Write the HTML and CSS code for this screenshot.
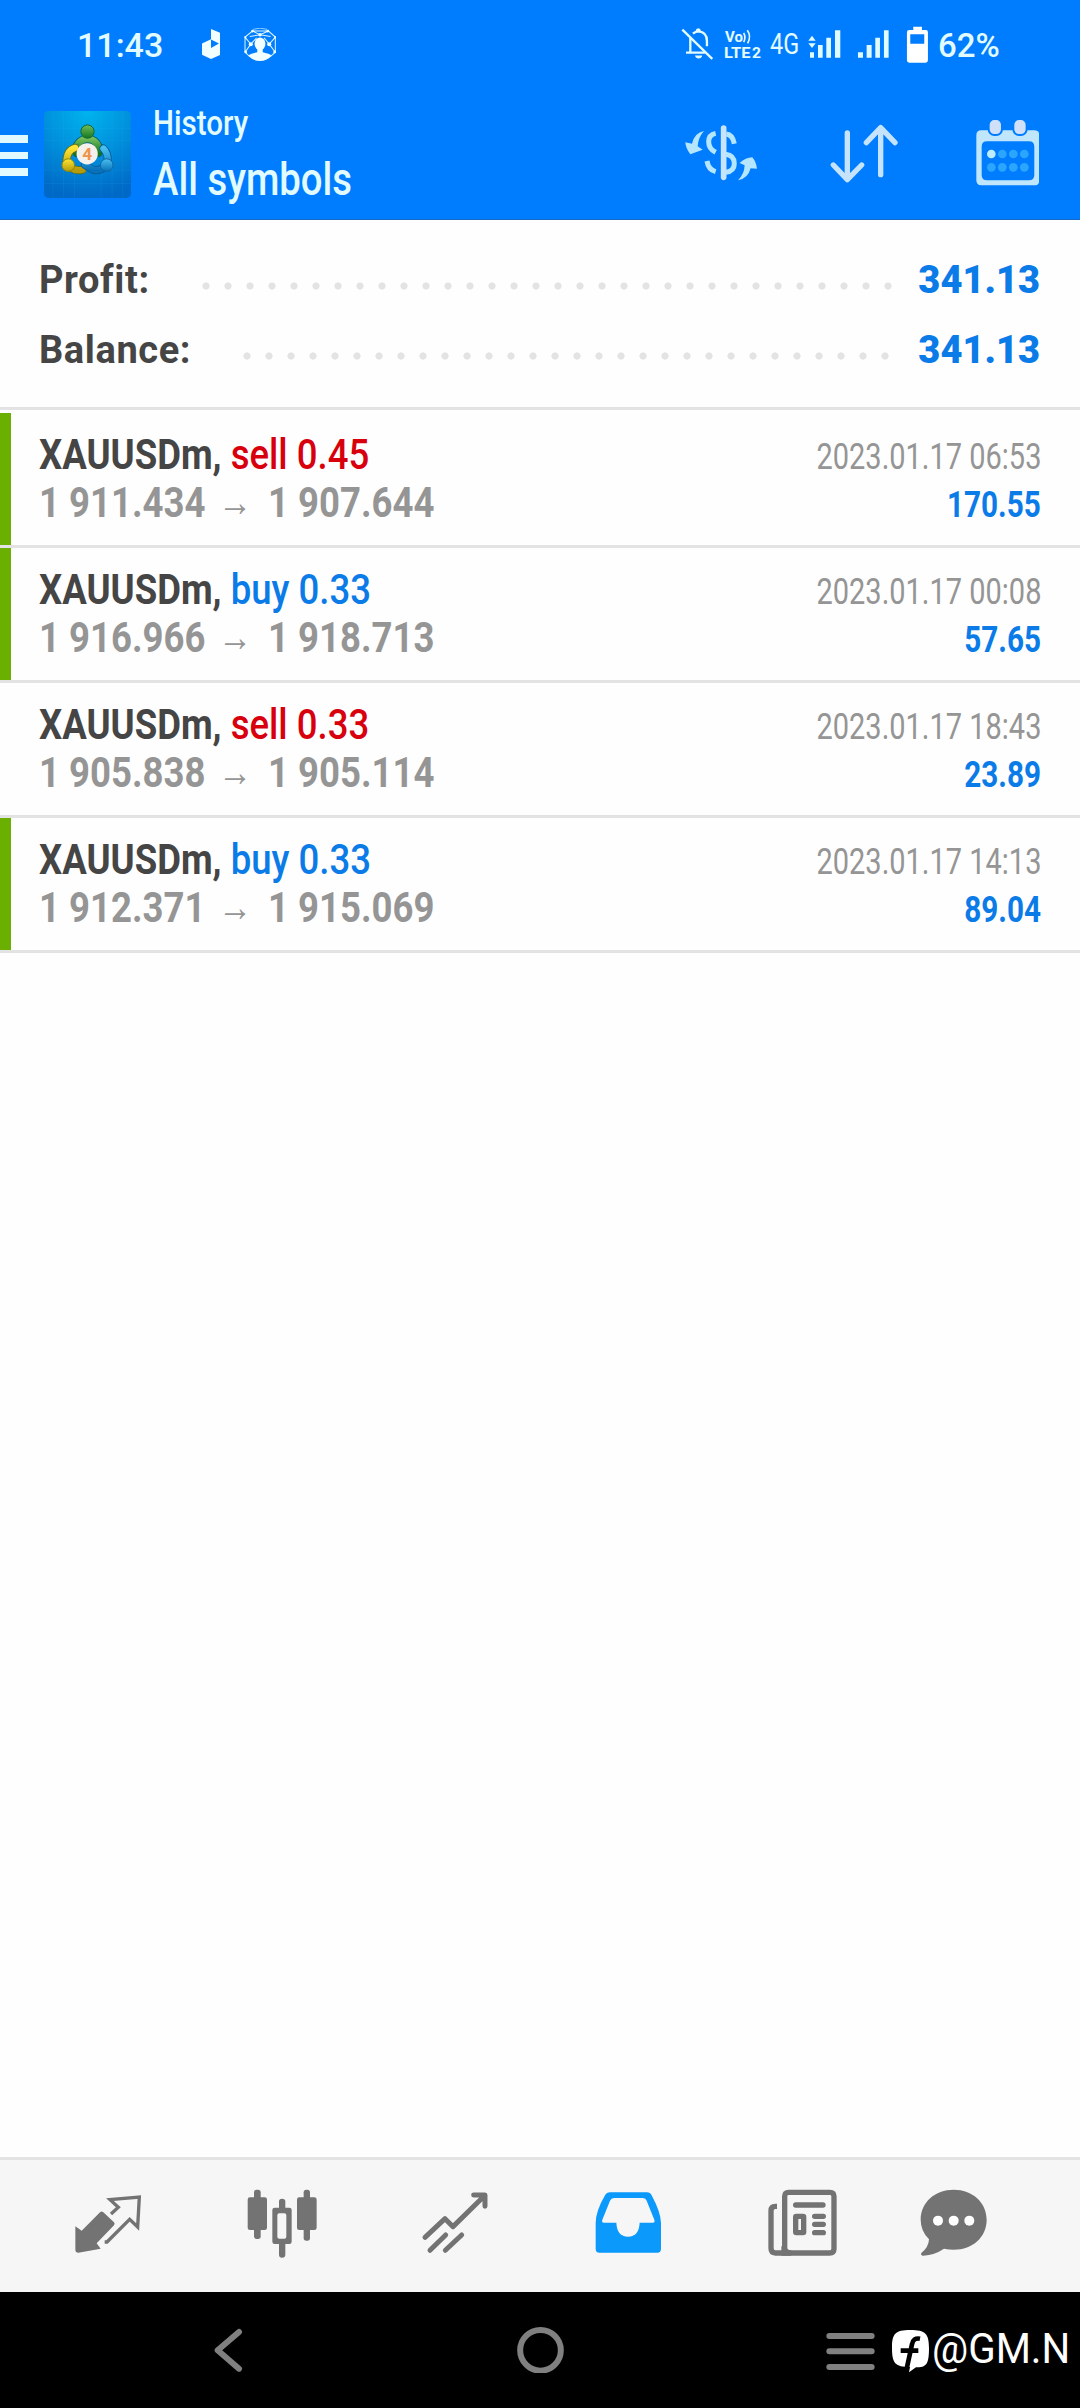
FILE: index.html
```html
<!DOCTYPE html>
<html lang="en">
  <head>
    <meta charset="utf-8" />
    <title>History - All symbols</title>
    <link rel="stylesheet" href="styles.css">
  </head>
  <body>
    <header class="header">
      <div class="status">
        <span class="clock">11:43</span>
        <svg class="status-app" viewBox="587 87 52 91" preserveAspectRatio="none">
          <path fill="#f2ffff" fill-rule="evenodd" d="M613 87L639 98V166L613 178L587 165V131L613 118ZM613 119V145L636 131Z" />
        </svg>
        <svg class="status-globe" viewBox="708 83 94 98" preserveAspectRatio="none">
          <g fill="none" stroke="#d8f6ff" stroke-width="3">
            <path d="M711 155V110L733 92H780L800 110V155L785 168M711 155L725 168M733 92L755 103L780 92M711 110L728 131L711 155M800 110L782 131L800 155M728 131L745 112M782 131L767 112M725 108L755 103L786 108" />
            <path stroke-width="2" d="M735 87Q755 80 776 87" />
          </g>
          <g fill="#f2ffff">
            <circle cx="755" cy="103" r="5" /><circle cx="728" cy="131" r="6" /><circle cx="782" cy="131" r="6" />
            <circle cx="733" cy="92" r="4" /><circle cx="778" cy="92" r="4" /><circle cx="712" cy="110" r="3" />
            <circle cx="799" cy="110" r="3" /><circle cx="713" cy="154" r="4" /><circle cx="798" cy="154" r="4" />
            <ellipse cx="755" cy="130" rx="16" ry="19" />
            <path d="M747 142H763V155L782 160Q788 163 788 167Q775 181 755 181Q735 181 722 167Q722 163 728 160L747 155Z" />
          </g>
        </svg>
        <svg class="status-bell" viewBox="62 80 98 110">
          <g fill="none" stroke="#e4fbff" stroke-width="7">
            <path d="M66 88L156 176" />
            <path d="M90 112V154M77 157H134" />
            <path d="M98 100Q105 93 115 93Q140 95 140 122V138" />
          </g>
          <path fill="#e4fbff" d="M106 92Q107 84 114 84Q121 84 122 92ZM104 166H126Q124 175 115 175Q106 175 104 166Z" />
        </svg>
        <svg class="status-volte" viewBox="190 80 116 110">
          <g class="volte-text">
            <text x="196" y="125" textLength="54" lengthAdjust="spacingAndGlyphs">Vo</text>
            <text x="193" y="172" textLength="80" lengthAdjust="spacingAndGlyphs">LTE</text>
            <text x="277" y="172" textLength="27" lengthAdjust="spacingAndGlyphs">2</text>
          </g>
          <path fill="none" stroke="#e4fbff" stroke-width="5" d="M252 98Q260 111 252 125M263 90Q276 108 264 129" />
        </svg>
        <span class="net">4G</span>
        <svg class="status-signal" viewBox="450 76 362 114">
          <g fill="#e0fbff">
            <path d="M451 120L462 105L473 120ZM451 128H473L462 142Z" />
            <path d="M456 155H468V171H456ZM480 133H494V171H480ZM505 111H519V171H505ZM531 89H547V171H531Z" />
            <path d="M600 155H615V171H600ZM626 133H641V171H626ZM652 111H666V171H652ZM678 89H692V171H678Z" />
          </g>
          <path fill="#fff" fill-rule="evenodd" d="M766 78H792V88H804Q810 88 810 95V179Q810 186 803 186H754Q747 186 747 179V95Q747 88 754 88H766ZM757 101V129H799V101Z" />
        </svg>
        <span class="charge">62%</span>
      </div>

      <div class="toolbar">
        <div class="menu"><i></i><i></i><i></i></div>
        <svg class="app-icon" viewBox="43 32 262 262">
          <defs>
            <radialGradient id="bg" cx="0.5" cy="0" r="1">
              <stop offset="0" stop-color="#00b4ee" />
              <stop offset="0.5" stop-color="#0090dc" />
              <stop offset="1" stop-color="#0068c6" />
            </radialGradient>
            <linearGradient id="green" x1="0" y1="0" x2="0" y2="1">
              <stop offset="0" stop-color="#71bd5c" /><stop offset="1" stop-color="#14771f" />
            </linearGradient>
            <linearGradient id="yellow" x1="0" y1="0" x2="0" y2="1">
              <stop offset="0" stop-color="#ffe535" /><stop offset="1" stop-color="#b59a0a" />
            </linearGradient>
            <linearGradient id="blue" x1="0" y1="0" x2="0" y2="1">
              <stop offset="0" stop-color="#49bfed" /><stop offset="1" stop-color="#0871b9" />
            </linearGradient>
          </defs>
          <rect x="43" y="32" width="262" height="262" rx="14" fill="url(#bg)" />
          <path stroke="#2cb0ee" stroke-opacity="0.2" stroke-width="2" d="M70 32V294M102 32V294M135 32V294M215 32V294M248 32V294M280 32V294M43 85H305M43 120H305M43 210H305M43 250H305" />
          <g fill="none" stroke-linecap="round">
            <path stroke="#0b5c71" stroke-width="25" d="M141 158A34 34 0 1 1 207 158" />
            <path stroke="url(#green)" stroke-width="20" d="M141 158A34 34 0 1 1 207 158" />
            <path stroke="#657013" stroke-width="24" d="M137 143Q111 151 111 184Q123 216 159 209" />
            <path stroke="url(#yellow)" stroke-width="19" d="M137 143Q111 151 111 184Q123 216 159 209" />
            <path stroke="#075b9b" stroke-width="24" d="M222 145Q236 160 235 184Q220 216 190 209L166 194" />
            <path stroke="url(#blue)" stroke-width="19" d="M222 145Q236 160 235 184Q220 216 190 209L166 194" />
          </g>
          <circle cx="174" cy="94" r="20" fill="url(#green)" stroke="#17672d" stroke-width="3" />
          <circle cx="116" cy="195" r="19" fill="url(#yellow)" stroke="#8a850f" stroke-width="3" />
          <circle cx="232" cy="195" r="19" fill="url(#blue)" stroke="#1265a6" stroke-width="3" />
          <circle cx="173" cy="161" r="32" fill="#f4f1ed" />
          <text class="app-four" x="173" y="180">4</text>
        </svg>
        <div class="titles">
          <div class="subtitle">History</div>
          <div class="title">All symbols</div>
        </div>
        <svg class="tool tool-dollar" viewBox="75 350 220 210">
          <g fill="none" stroke="#b5e6fd">
            <path stroke="#c8e3fc" stroke-width="17" stroke-linecap="round" d="M194 383V531" />
            <path stroke-width="15" d="M170 399Q149 403 149 424Q149 445 170 456" />
            <path stroke-width="15" d="M202 401Q221 403 226 430" />
            <path stroke-width="15" d="M144 482Q148 508 170 514" />
            <path stroke-width="15" d="M200 462Q226 465 226 490Q226 512 200 516" />
          </g>
          <path fill="#b5e6fd" d="M135 392Q107 397 99 430L79 426Q80 444 94 462L131 448L116 438Q118 410 135 392Z" />
          <path fill="#b5e6fd" d="M237 540Q267 535 275 504L294 505Q292 485 280 471Q260 472 242 488L257 495Q256 522 237 540Z" />
        </svg>
        <svg class="tool tool-sort" viewBox="510 350 210 210">
          <g fill="none" stroke="#c5e4fc" stroke-width="16" stroke-linecap="round" stroke-linejoin="round">
            <path d="M565 398V535M523 494L565 538L608 494" />
            <path d="M665 523V388M622 427L665 382L708 427" />
          </g>
        </svg>
        <svg class="tool tool-calendar" viewBox="950 350 190 210">
          <path fill="#c0e6fc" fill-rule="evenodd" d="M966 390H1125Q1140 390 1140 405V540Q1140 555 1125 555H966Q951 555 951 540V405Q951 390 966 390ZM983 423Q967 423 967 439V524Q967 540 983 540H1109Q1125 540 1125 524V439Q1125 423 1109 423Z" />
          <g fill="#cfe0f8" stroke="#007dff" stroke-width="6">
            <rect x="988" y="356" width="40" height="48" rx="17" /><rect x="1062" y="356" width="40" height="48" rx="17" />
          </g>
          <circle cx="996" cy="461" r="13" fill="#bdecff" />
          <g fill="#2ba6ff">
            <circle cx="1029" cy="461" r="13" /><circle cx="1062" cy="461" r="13" /><circle cx="1095" cy="461" r="13" />
            <circle cx="996" cy="501" r="13" /><circle cx="1029" cy="501" r="13" /><circle cx="1062" cy="501" r="13" /><circle cx="1095" cy="501" r="13" />
          </g>
        </svg>
      </div>
    </header>

    <main class="content">
      <section class="summary">
        <div class="sum-row"><span>Profit:</span><i class="dots dots-profit"></i><b>341.13</b></div>
        <div class="sum-row"><span>Balance:</span><i class="dots dots-balance"></i><b>341.13</b></div>
      </section>

      <section class="deals">
        <div class="deal hit">
          <div class="deal-left">
            <div class="symbol"><b>XAUUSDm,</b> <span class="sell">sell 0.45</span></div>
            <div class="prices"><span class="from">1 911.434</span><span class="arrow">→</span><span class="to">1 907.644</span></div>
          </div>
          <div class="deal-right"><div class="date">2023.01.17 06:53</div><div class="profit">170.55</div></div>
        </div>
        <div class="deal hit">
          <div class="deal-left">
            <div class="symbol"><b>XAUUSDm,</b> <span class="buy">buy 0.33</span></div>
            <div class="prices"><span class="from">1 916.966</span><span class="arrow">→</span><span class="to">1 918.713</span></div>
          </div>
          <div class="deal-right"><div class="date">2023.01.17 00:08</div><div class="profit">57.65</div></div>
        </div>
        <div class="deal">
          <div class="deal-left">
            <div class="symbol"><b>XAUUSDm,</b> <span class="sell">sell 0.33</span></div>
            <div class="prices"><span class="from">1 905.838</span><span class="arrow">→</span><span class="to">1 905.114</span></div>
          </div>
          <div class="deal-right"><div class="date">2023.01.17 18:43</div><div class="profit">23.89</div></div>
        </div>
        <div class="deal hit">
          <div class="deal-left">
            <div class="symbol"><b>XAUUSDm,</b> <span class="buy">buy 0.33</span></div>
            <div class="prices"><span class="from">1 912.371</span><span class="arrow">→</span><span class="to">1 915.069</span></div>
          </div>
          <div class="deal-right"><div class="date">2023.01.17 14:13</div><div class="profit">89.04</div></div>
        </div>
      </section>
    </main>

    <nav class="tabs">
      <!-- quotes -->
      <svg viewBox="67 118 216 220">
        <path fill="#737373" d="M77 230L96 243L151 188Q156 183 161 188L193 218Q197 222 193 227L141 281L153 297L86 309Q77 309 77 300Z" />
        <path fill="none" stroke="#737373" stroke-width="10" d="M184 193L206 173L181 150L269 142L264 232L240 209L172 277L165 277" />
      </svg>
      <!-- charts -->
      <svg viewBox="585 118 216 220">
        <g fill="#737373">
          <rect x="609" y="120" width="20" height="148" rx="8" /><rect x="590" y="143" width="58" height="98" rx="7" />
          <rect x="758" y="120" width="19" height="153" rx="8" /><rect x="738" y="143" width="59" height="98" rx="7" />
          <path fill-rule="evenodd" d="M684 155Q684 147 693 147Q703 147 703 155V174H715Q722 174 722 181V276Q722 283 715 283H703V315Q703 324 693 324Q684 324 684 315V283H671Q664 283 664 276V181Q664 174 671 174H684ZM685 191Q679 191 679 197V261Q679 267 685 267H700Q706 267 706 261V197Q706 191 700 191Z" />
        </g>
      </svg>
      <!-- trade -->
      <svg viewBox="1104 118 216 220">
        <g fill="none" stroke="#737373" stroke-width="15" stroke-linecap="round" stroke-linejoin="round">
          <path d="M1122 263L1182 207L1206 231L1302 137M1268 136H1302V170" />
          <path d="M1137 302L1184 256M1183 302L1232 256" />
        </g>
      </svg>
      <!-- history -->
      <svg viewBox="94 118 216 220">
        <path fill="#0b99fb" fill-rule="evenodd" d="M148 128H259Q269 128 273 137Q301 190 301 220V297Q301 309 290 309H116Q105 309 105 297V220Q105 185 133 137Q138 128 148 128ZM160 145Q151 145 148 153L125 210Q122 219 130 219H167Q169 261 202 261Q235 261 237 219H276Q284 219 281 210L258 153Q255 145 247 145Z" />
      </svg>
      <!-- news -->
      <svg viewBox="614 118 216 220">
        <g fill="none" stroke="#737373" stroke-width="16">
          <path d="M647 170H642Q629 170 629 183V296Q629 310 642 310H805Q818 310 818 297V140Q818 128 806 128H682Q670 128 670 140V310" />
          <path stroke-linecap="round" d="M703 166H785M760 200H786M760 224H786M760 249H786" />
          <rect x="703" y="200" width="24" height="49" rx="2" />
        </g>
        <path fill="#737373" d="M660 290V318H690V302Q676 302 676 290Z" />
      </svg>
      <!-- messages -->
      <svg viewBox="1069 118 216 220">
        <path fill="#737373" d="M1179 120C1235 120 1278 158 1278 210S1236 300 1180 300Q1164 300 1150 297Q1122 316 1088 318Q1078 317 1082 310Q1104 293 1105 269Q1080 244 1080 210C1080 158 1123 120 1179 120Z" />
        <g fill="#fff"><circle cx="1132" cy="213" r="15" /><circle cx="1179" cy="213" r="15" /><circle cx="1226" cy="213" r="15" /></g>
      </svg>
    </nav>

    <footer class="system">
      <svg class="sys-back" viewBox="98 111 90 140"><path d="M176 126L112 181L176 236" /></svg>
      <svg class="sys-home" viewBox="1011 111 141 140"><circle cx="1081.500" cy="181" r="61" /></svg>
      <svg class="sys-recent" viewBox="138 111 147 140"><path d="M148 138H275M148 184H275M148 231H275" /></svg>
      <svg class="sys-logo" viewBox="337 111 111 140">
        <path fill="#fff" d="M392 120C438 120 448 132 448 174C448 224 440 232 409 232L388 247L391 231C346 231 337 219 337 174C337 132 346 120 392 120Z" />
        <path fill="none" stroke="#000" stroke-width="14" d="M421 146Q401 142 397 163L381 236M363 182H416" />
      </svg>
      <span class="handle">@GM.N</span>
    </footer>
  </body>
</html>
```

FILE: styles.css
```css
* {
  box-sizing: border-box;
}

body {
  margin: 0;
  width: 1080px;
  height: 2408px;
  display: flex;
  flex-direction: column;
  background: #fefefe;
  font-family: Roboto, "Liberation Sans", sans-serif;
  overflow: hidden;
}

svg {
  display: block;
  flex: none;
}

/* header */
.header {
  height: 220px;
  background: #007dff;
  border-bottom: 1px solid #1767c5;
  color: #e2fbff;
}

.status {
  display: flex;
  align-items: flex-start;
  height: 80px;
  padding: 27px 0 0 77px;
}

.clock,
.charge {
  font-size: 34px;
  line-height: 37px;
  font-weight: 500;
}

.clock {
  width: 125px;
}

.status-app {
  width: 18px;
  height: 30px;
  margin-top: 2px;
}

.status-globe {
  width: 32px;
  height: 33px;
  margin: 1px 0 0 24px;
}

.status-bell {
  width: 32.600px;
  height: 36.600px;
  margin-left: 404.700px;
}

.status-volte {
  width: 38.600px;
  height: 36.600px;
  margin-left: 10px;
}

.volte-text {
  fill: #e4fbff;
  font-size: 46px;
  font-weight: bold;
}

.net {
  width: 38px;
  margin-left: 8px;
  font-size: 30px;
  line-height: 34px;
  transform: scaleX(0.78);
  transform-origin: left;
}

.status-signal {
  width: 120.600px;
  height: 38px;
  margin: -1px 0 0 0;
}

.charge {
  margin-left: 10px;
  transform: scaleX(0.97);
  transform-origin: left;
}

.toolbar {
  display: flex;
  align-items: center;
  height: 139px;
  padding: 4px 40px 0 0;
}

.menu {
  width: 28px;
  display: flex;
  flex-direction: column;
  gap: 9px;
  margin-top: 8px;
}

.menu i {
  height: 7.500px;
  background: #e0faff;
}

.app-icon {
  width: 87px;
  height: 87px;
  margin: 5px 0 0 16px;
}

.app-four {
  fill: #f0934c;
  font-size: 52px;
  font-weight: bold;
  text-anchor: middle;
}

.titles {
  width: 531px;
  margin: 8px 0 0 22px;
}

.subtitle,
.title {
  width: max-content;
  font-weight: 500;
  transform-origin: left;
}

.subtitle {
  font-size: 35px;
  line-height: 46px;
  transform: scaleX(0.845);
}

.title {
  font-size: 47px;
  line-height: 64px;
  transform: scaleX(0.815);
}

.tool {
  height: 70px;
}

.tool-dollar {
  width: 73.300px;
  margin-right: 71.700px;
}

.tool-sort {
  width: 70px;
  margin-right: 76.700px;
}

.tool-calendar {
  width: 63.300px;
}

/* totals */
.content {
  flex: 1;
}

.summary {
  height: 190px;
  padding: 25px 40px 0 39px;
  border-bottom: 3px solid #e3e3e3;
  font-size: 38px;
  font-weight: bold;
  color: #454545;
}

.sum-row {
  display: flex;
  justify-content: space-between;
  align-items: center;
  height: 70px;
}

.sum-row span {
  letter-spacing: 0.600px;
}

.sum-row b {
  color: #0b7be8;
}

.dots {
  height: 8px;
  margin-top: 11px;
  margin-left: auto;
  background: radial-gradient(circle at 11px 4px, #e3e3e3 3.300px, transparent 3.900px) 0 0 / 22px 8px repeat-x;
}

.dots-profit {
  width: 704px;
  margin-right: 19px;
}

.dots-balance {
  width: 660px;
  margin-right: 22px;
}

/* deals */
.deals {
  padding-top: 3px;
}

.deal {
  display: flex;
  justify-content: space-between;
  height: 135px;
  padding: 16px 39px 0 39px;
  border-bottom: 3px solid #e3e3e3;
}

.deal.hit {
  background: linear-gradient(#6bb000, #6bb000) 0 0 / 11px 132px no-repeat;
}

.symbol {
  width: max-content;
  font-size: 43px;
  line-height: 50px;
  color: #454545;
  transform: scaleX(0.85);
  transform-origin: left;
}

.sell,
.buy {
  font-weight: 500;
}

.sell {
  color: #d9000d;
}

.buy {
  color: #0b7be8;
}

.prices {
  display: flex;
  height: 48px;
  font-size: 43px;
  line-height: 47px;
  font-weight: bold;
  color: #959595;
}

.from,
.to {
  width: 184px;
  white-space: nowrap;
  transform: scaleX(0.85);
  transform-origin: left;
}

.arrow {
  width: 45px;
  margin: 0 5px 0 -5px;
  font-family: "Liberation Sans", sans-serif;
  font-size: 40px;
  font-weight: normal;
  line-height: 46px;
  transform: scaleX(0.85);
  transform-origin: left;
}

.deal-right {
  display: flex;
  flex-direction: column;
  align-items: flex-end;
  font-size: 36px;
}

.date {
  line-height: 56px;
  color: #959595;
  transform: scaleX(0.805);
  transform-origin: right;
}

.profit {
  line-height: 41px;
  font-weight: bold;
  color: #0b7be8;
  transform: scaleX(0.825);
  transform-origin: right;
}

/* bottom tabs */
.tabs {
  display: grid;
  grid-template-columns: repeat(5, 173.300px) 130px;
  justify-items: center;
  align-items: center;
  height: 135px;
  padding-left: 21.700px;
  border-top: 3px solid #e3e3e3;
  background: #f6f6f6;
}

.tabs svg {
  width: 72px;
  height: 73.300px;
}

/* system bar */
.system {
  display: flex;
  align-items: center;
  height: 116px;
  background: #000;
}

.system svg {
  height: 46.700px;
}

.sys-back,
.sys-home,
.sys-recent {
  fill: none;
  stroke: #808080;
  stroke-width: 18;
  stroke-linecap: round;
  stroke-linejoin: round;
}

.sys-back {
  width: 30px;
  margin-left: 212.700px;
}

.sys-home {
  width: 47px;
  margin-left: 274.300px;
}

.sys-recent {
  width: 49px;
  margin-left: 262px;
}

.sys-logo {
  width: 37px;
  margin-left: 17.300px;
}

.handle {
  margin: -3px 0 0 3px;
  color: #fff;
  font-size: 42px;
  transform: scaleX(0.96);
  transform-origin: left;
}
```
